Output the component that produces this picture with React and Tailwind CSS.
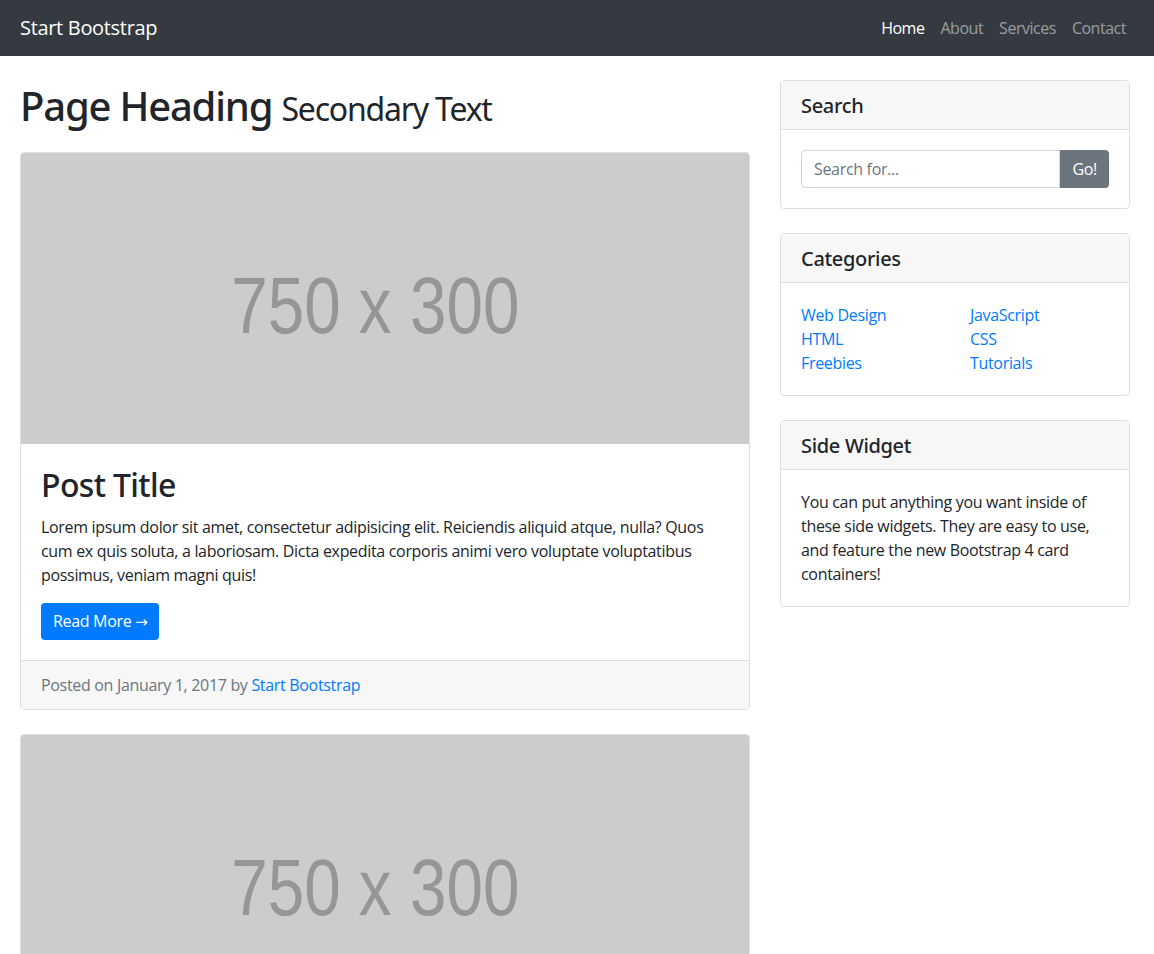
const font = "font-['Open_Sans',sans-serif]"
const head = "font-['Noto_Sans',sans-serif] font-medium"

function Placeholder() {
  return (
    <svg viewBox="0 0 750 300" className="block w-full h-auto rounded-t-[3px] tracking-normal">
      <rect width="750" height="300" fill="#cccccc" />
      <text
        x="365"
        y="185"
        textAnchor="middle"
        textLength="297"
        lengthAdjust="spacingAndGlyphs"
        letterSpacing="0"
        fontFamily="Liberation Sans, Arial, sans-serif"
        fontSize="82"
        fill="#969696"
      >
        750 x 300
      </text>
    </svg>
  )
}

function Post() {
  return (
    <div className="mb-6 rounded border border-[#dfdfdf] bg-white">
      <Placeholder />
      <div className="p-5">
        <h2 className={`${head} mb-[10px] pt-[2px] text-[32px] leading-[1.2] tracking-[-0.02em] text-[#212529]`}>
          Post Title
        </h2>
        <p className="mb-4 text-[#212529]">
          Lorem ipsum dolor sit amet, consectetur adipisicing elit. Reiciendis aliquid atque, nulla? Quos cum ex quis
          soluta, a laboriosam. Dicta expedita corporis animi vero voluptate voluptatibus possimus, veniam magni quis!
        </p>
        <a href="#" className="inline-block rounded bg-[#007bff] px-3 py-[6px] leading-6 text-white">
          Read More <span className="font-['DejaVu_Sans',sans-serif] text-[15px]">&rarr;</span>
        </a>
      </div>
      <div className="border-t border-[#dfdfdf] bg-[#f7f7f7] px-5 py-3 text-[#6c757d]">
        Posted on January 1, 2017 by{' '}
        <a href="#" className="text-[#007bff]">
          Start Bootstrap
        </a>
      </div>
    </div>
  )
}

function Widget({ title, children }) {
  return (
    <div className="mb-6 rounded border border-[#dfdfdf] bg-white">
      <div className="border-b border-[#dfdfdf] bg-[#f7f7f7] px-5 pt-[13px] pb-[11px]">
        <h5 className={`${head} text-xl leading-6 text-[#212529]`}>{title}</h5>
      </div>
      <div className="p-5">{children}</div>
    </div>
  )
}

export default function App() {
  const links = ['Home', 'About', 'Services', 'Contact']
  return (
    <div className={`${font} min-h-screen bg-white text-base leading-6 text-[#212529] tracking-[-0.02em]`}>
      <nav className="flex h-14 items-center justify-between bg-[#343a40] px-5">
        <a href="#" className="text-xl leading-[30px] text-white">
          Start Bootstrap
        </a>
        <ul className="flex tracking-[-0.03em]">
          {links.map((l, i) => (
            <li key={l}>
              <a href="#" className={`block px-2 py-2 ${i === 0 ? 'text-white' : 'text-white/50'}`}>
                {l}
              </a>
            </li>
          ))}
        </ul>
      </nav>

      <div className="flex gap-[30px] px-5">
        <div className="w-[730px] shrink-0">
          <h1 className={`${head} mt-[26px] mb-[22px] text-[40px] leading-[1.2] tracking-[-0.03em]`}>
            Page Heading <small className="text-[32px] font-normal">Secondary Text</small>
          </h1>
          <Post />
          <Post />
        </div>

        <div className="mt-6 w-[350px] shrink-0">
          <Widget title="Search">
            <div className="flex">
              <input
                type="text"
                placeholder="Search for..."
                className="h-[38px] min-w-0 flex-1 rounded-l border border-[#ced4da] px-3 text-[#495057] placeholder:text-[#6c757d] outline-none"
              />
              <button className="h-[38px] rounded-r bg-[#6c757d] px-3 text-white">Go!</button>
            </div>
          </Widget>
          <Widget title="Categories">
            <div className="grid grid-cols-[169px_1fr]">
              <ul>
                <li><a href="#" className="text-[#007bff]">Web Design</a></li>
                <li><a href="#" className="text-[#007bff]">HTML</a></li>
                <li><a href="#" className="text-[#007bff]">Freebies</a></li>
              </ul>
              <ul>
                <li><a href="#" className="text-[#007bff]">JavaScript</a></li>
                <li><a href="#" className="text-[#007bff]">CSS</a></li>
                <li><a href="#" className="text-[#007bff]">Tutorials</a></li>
              </ul>
            </div>
          </Widget>
          <Widget title="Side Widget">
            <p className="pr-2">
              You can put anything you want inside of these side widgets. They are easy to use, and feature the new
              Bootstrap 4 card containers!
            </p>
          </Widget>
        </div>
      </div>
    </div>
  )
}
